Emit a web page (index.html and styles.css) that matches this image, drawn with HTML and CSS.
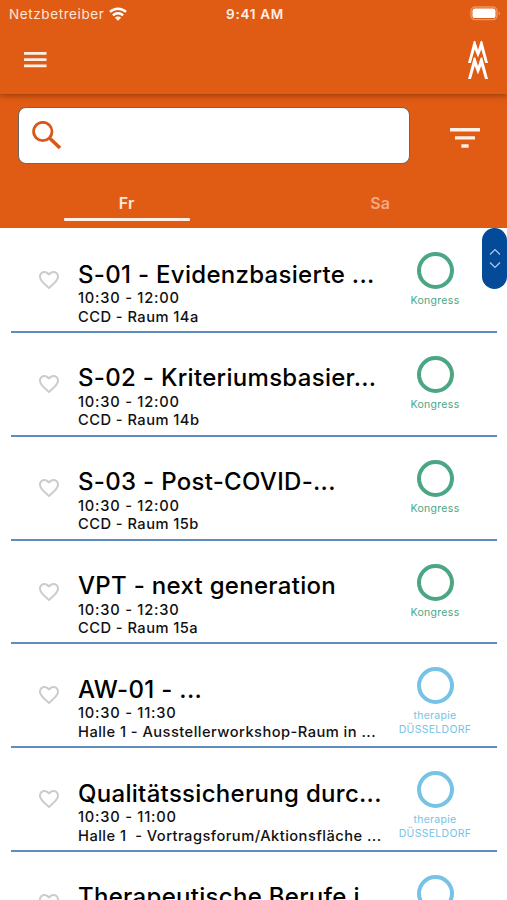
FILE: index.html
```html
<!DOCTYPE html>
<html lang="de">
<head>
    <meta charset="UTF-8">
    <meta name="viewport" content="width=device-width, initial-scale=1.0">
    <title>Programm</title>
    <link rel="stylesheet" href="styles.css">
</head>
<body>
    <header class="header">
        <div class="status-bar">
            <div class="carrier">
                <span>Netzbetreiber</span>
                <svg class="wifi" width="18" height="14" viewBox="0 0 18 14" fill="none" stroke="#fff" stroke-width="2.4">
                    <path d="M1 4.900C5.500.6 12.500.6 17 4.900"/>
                    <path d="M3.900 8.300C6.800 5.600 11.200 5.600 14.100 8.300"/>
                    <path d="M9 13.800L5.900 10.700C7.700 9.200 10.300 9.200 12.100 10.700Z" fill="#fff" stroke="none"/>
                </svg>
            </div>
            <span class="clock">9:41 AM</span>
            <svg class="battery" width="31" height="15" viewBox="0 0 31 15">
                <rect x="1" y="1" width="26" height="12.600" rx="4" fill="none" stroke="#ee9568" stroke-width="1.400"/>
                <rect x="2.500" y="2.500" width="23" height="9.600" rx="2.200" fill="#fff"/>
                <path d="M28.700 5.200C30.500 6 30.500 8.600 28.700 9.400Z" fill="#ee9568"/>
            </svg>
        </div>
        <div class="toolbar">
            <svg class="menu-icon" width="24" height="16" viewBox="0 0 24 16" fill="#fff0e6">
                <path d="M1 0h22.500v2.800H1zM1 6.200h22.500v2.800H1zM1 12.400h22.500v2.800H1z"/>
            </svg>
            <svg class="logo" width="22" height="40" viewBox="0 0 22 40" fill="#fff">
                <path d="M1 23L6.800 1H8.300L11 10L13.700 1H15.200L21 23H18.200L14.300 9.500L11 17.500L7.700 9.500L3.800 23Z"/>
                <path d="M1 39L6.800 17.500H8.300L11 26L13.700 17.500H15.200L21 39H18L14.300 26L11 34.500L7.700 26L4 39Z"/>
            </svg>
        </div>
    </header>

    <div class="search-area">
        <div class="search-row">
            <div class="search-box">
                <svg width="30" height="30" viewBox="0 0 30 30" fill="none" stroke="#d9571a">
                    <circle cx="10.800" cy="10.500" r="9.200" stroke-width="2.800"/>
                    <path d="M18 17.500L28 27" stroke-width="3.600"/>
                </svg>
            </div>
            <svg class="filter-icon" width="30" height="20" viewBox="0 0 30 20" fill="#fff0e6">
                <path d="M0 0h30v3.400H0zM5 8.200h20v3.400H5zM11.400 16.300h7.200v3.400h-7.200z"/>
            </svg>
        </div>
        <div class="tabs">
            <div class="tab active">Fr</div>
            <div class="tab">Sa</div>
        </div>
    </div>

    <main class="list">
        <div class="scroll-handle">
            <svg width="12" height="22" viewBox="0 0 12 22" fill="none" stroke="#b5cbe6" stroke-width="1.200">
                <path d="M1 6.500L6 1.500L11 6.500M1 14.500L6 19.500L11 14.500"/>
            </svg>
        </div>

        <div class="item">
            <svg class="heart"><use href="#heart"/></svg>
            <div class="info">
                <div class="title">S-01 - Evidenzbasierte ...</div>
                <div class="time">10:30 - 12:00</div>
                <div class="room">CCD - Raum 14a</div>
            </div>
            <div class="category kongress"><span class="ring"></span>Kongress</div>
        </div>
        <div class="item">
            <svg class="heart"><use href="#heart"/></svg>
            <div class="info">
                <div class="title">S-02 - Kriteriumsbasier...</div>
                <div class="time">10:30 - 12:00</div>
                <div class="room">CCD - Raum 14b</div>
            </div>
            <div class="category kongress"><span class="ring"></span>Kongress</div>
        </div>
        <div class="item">
            <svg class="heart"><use href="#heart"/></svg>
            <div class="info">
                <div class="title">S-03 - Post-COVID-...</div>
                <div class="time">10:30 - 12:00</div>
                <div class="room">CCD - Raum 15b</div>
            </div>
            <div class="category kongress"><span class="ring"></span>Kongress</div>
        </div>
        <div class="item">
            <svg class="heart"><use href="#heart"/></svg>
            <div class="info">
                <div class="title">VPT - next generation</div>
                <div class="time">10:30 - 12:30</div>
                <div class="room">CCD - Raum 15a</div>
            </div>
            <div class="category kongress"><span class="ring"></span>Kongress</div>
        </div>
        <div class="item">
            <svg class="heart"><use href="#heart"/></svg>
            <div class="info">
                <div class="title">AW-01 - ...</div>
                <div class="time">10:30 - 11:30</div>
                <div class="room">Halle 1 - Ausstellerworkshop-Raum in ...</div>
            </div>
            <div class="category therapie"><span class="ring"></span>therapie<br>DÜSSELDORF</div>
        </div>
        <div class="item">
            <svg class="heart"><use href="#heart"/></svg>
            <div class="info">
                <div class="title">Qualitätssicherung durc...</div>
                <div class="time">10:30 - 11:00</div>
                <div class="room">Halle 1&nbsp; - Vortragsforum/Aktionsfläche ...</div>
            </div>
            <div class="category therapie"><span class="ring"></span>therapie<br>DÜSSELDORF</div>
        </div>
        <div class="item">
            <svg class="heart"><use href="#heart"/></svg>
            <div class="info">
                <div class="title">Therapeutische Berufe i</div>
            </div>
            <div class="category therapie"><span class="ring"></span></div>
        </div>
    </main>

    <svg class="symbols" width="0" height="0">
        <symbol id="heart" viewBox="0 0 24 24">
            <path d="M16.500 3c-1.740 0-3.410.81-4.500 2.090C10.910 3.810 9.240 3 7.500 3 4.420 3 2 5.420 2 8.500c0 3.780 3.400 6.860 8.550 11.540L12 21.350l1.450-1.320C18.600 15.360 22 12.280 22 8.500 22 5.420 19.580 3 16.500 3zm-4.400 15.550l-.1.100-.1-.1C7.140 14.240 4 11.390 4 8.500 4 6.500 5.500 5 7.500 5c1.540 0 3.040.99 3.570 2.360h1.870C13.460 5.990 14.960 5 16.500 5c2 0 3.500 1.500 3.500 3.500 0 2.890-3.140 5.740-7.900 10.050z"/>
        </symbol>
    </svg>
</body>
</html>
```

FILE: styles.css
```css
* {
    box-sizing: border-box;
}

body {
    margin: 0;
    height: 900px;
    overflow: hidden;
    background-color: #fff;
    font-family: Inter, Roboto, sans-serif;
    color: #000;
}

.header {
    position: relative;
    height: 94px;
    background-color: #e05b14;
    box-shadow: 0 1px 6px rgba(80, 30, 0, 0.6);
    color: #fff;
}

.status-bar {
    display: grid;
    grid-template-columns: 1fr auto 1fr;
    align-items: center;
    height: 27px;
    padding: 0 6px 0 9px;
    font-size: 13.5px;
}

.carrier {
    display: flex;
    align-items: center;
    gap: 5px;
    letter-spacing: 0.6px;
    color: #ffe6d8;
}

.clock {
    font-weight: 600;
    font-size: 13.5px;
    letter-spacing: 0.7px;
    color: #fff0e6;
}

.battery {
    justify-self: end;
}

.toolbar {
    display: flex;
    justify-content: space-between;
    align-items: center;
    height: 66px;
    padding: 0 18px 0 23px;
}

.search-area {
    height: 134px;
    padding-top: 13px;
    background-color: #e05b14;
}

.search-row {
    display: flex;
    align-items: center;
    justify-content: space-between;
    padding: 0 27px 0 18px;
}

.search-box {
    width: 392px;
    height: 57px;
    padding: 13px;
    border: 1px solid #6b6660;
    border-radius: 8px;
    background-color: #fff;
}

.filter-icon {
    margin-top: 4px;
}

.tabs {
    display: flex;
    height: 57px;
}

.tab {
    flex: 1;
    display: flex;
    flex-direction: column;
    align-items: center;
    padding-top: 28px;
    font-size: 16px;
    font-weight: 600;
    line-height: 22px;
    letter-spacing: 0.3px;
    color: #f3a885;
}

.tab.active {
    color: #ffeadd;
}

.tab.active::after {
    content: "";
    width: 126px;
    height: 3px;
    margin-top: 4px;
    border-radius: 1px;
    background-color: #fff0e6;
}

.list {
    position: relative;
    padding: 1.3px 10px 0 11px;
}

.scroll-handle {
    position: absolute;
    top: 0;
    right: 0;
    display: flex;
    align-items: center;
    justify-content: center;
    width: 25px;
    height: 61px;
    border-radius: 12.5px;
    background-color: #034a98;
}

.item {
    display: flex;
    height: 103.8px;
    border-bottom: 2px solid #5f8cba;
}

.heart {
    width: 24px;
    height: 24px;
    margin: 39px 17px 0 26px;
    flex-shrink: 0;
    fill: #ccc;
}

.info {
    width: 310px;
    padding-top: 31.4px;
    flex-shrink: 0;
    white-space: nowrap;
}

.title {
    font-size: 24px;
    font-weight: 450;
    line-height: 28.5px;
    letter-spacing: 0.3px;
}

.time,
.room {
    font-size: 14.7px;
    font-weight: 500;
    line-height: 18.5px;
    letter-spacing: 0.45px;
    color: #111;
}

.time {
    letter-spacing: 0.75px;
}

.category {
    width: 94px;
    padding-top: 23px;
    flex-shrink: 0;
    text-align: center;
    font-size: 10.5px;
    line-height: 13.5px;
    letter-spacing: 0.3px;
}

.ring {
    display: block;
    width: 37px;
    height: 37px;
    margin: 0 auto 5px;
    border: 4px solid;
    border-radius: 50%;
}

.kongress {
    color: #4ca583;
}

.therapie {
    color: #76c3e6;
}

.symbols {
    position: absolute;
}
```
